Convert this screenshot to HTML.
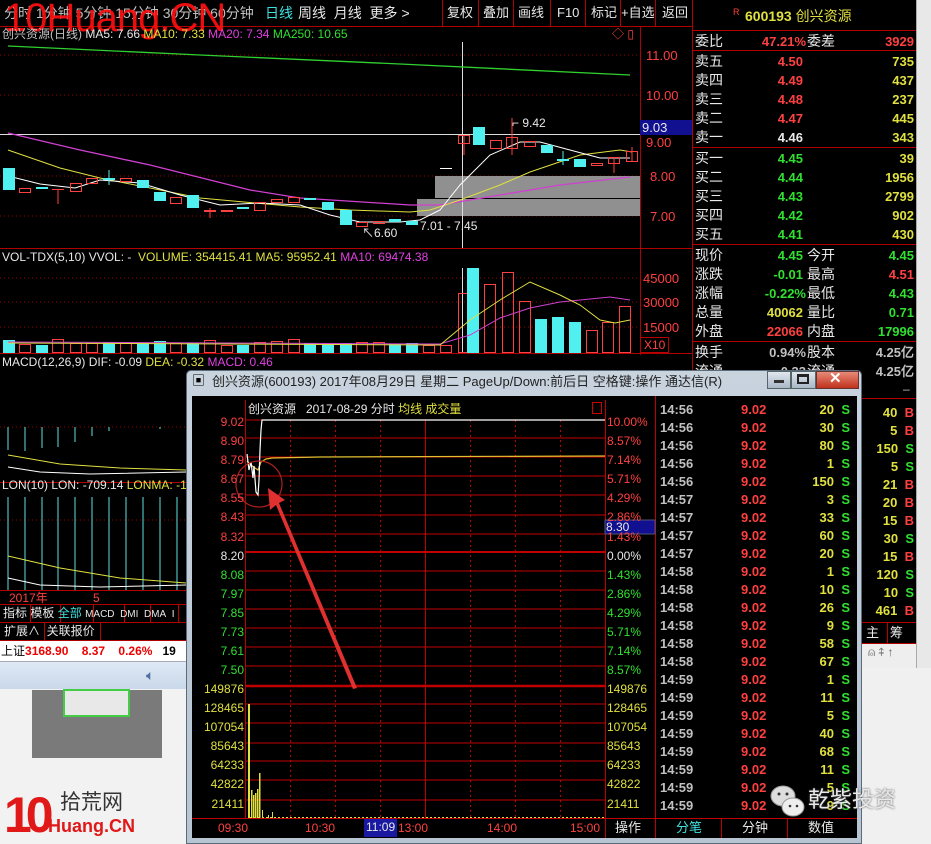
<!DOCTYPE html>
<html><head><meta charset="utf-8">
<style>
*{margin:0;padding:0;box-sizing:border-box}
body{width:931px;height:844px;overflow:hidden;background:#f0f0f0;position:relative;font-family:"Liberation Sans","Noto Sans CJK SC",sans-serif;}
.a{position:absolute;white-space:nowrap;line-height:1}
.w{color:#e8e8e8}.r{color:#ff4040}.g{color:#30e030}.y{color:#e0e040}.c{color:#40e0e0}.m{color:#e040e0}.gr{color:#c0c0c0}
.n{font-family:"Liberation Sans",sans-serif;font-weight:bold}
.tb{position:absolute;top:6px;font-size:13px;color:#e8e8e8;line-height:1;white-space:nowrap}
</style></head><body>
<div class="a" style="left:0;top:0;width:916px;height:668px;background:#000"></div>
<div class="a" style="left:916px;top:0;width:15px;height:668px;background:#e8e8e8;border-left:1px solid #aaa"></div>
<svg class="a" style="left:0;top:0" width="916" height="668">
<g stroke="#b00000" stroke-width="1" fill="none">
<line x1="0" y1="26.5" x2="692" y2="26.5"/>
<line x1="442.5" y1="0" x2="442.5" y2="26"/><line x1="478.5" y1="0" x2="478.5" y2="26"/><line x1="513.5" y1="0" x2="513.5" y2="26"/><line x1="550.5" y1="0" x2="550.5" y2="26"/><line x1="585.5" y1="0" x2="585.5" y2="26"/><line x1="620.5" y1="0" x2="620.5" y2="26"/><line x1="655.5" y1="0" x2="655.5" y2="26"/>
<line x1="640.5" y1="26" x2="640.5" y2="355"/>
<line x1="692.5" y1="0" x2="692.5" y2="668"/>
<line x1="0" y1="248.5" x2="692" y2="248.5"/>
<line x1="0" y1="353.5" x2="692" y2="353.5"/>
<line x1="0" y1="482.5" x2="186" y2="482.5"/>
<line x1="0" y1="590.5" x2="186" y2="590.5"/>
<line x1="0" y1="604.5" x2="186" y2="604.5"/>
<line x1="0" y1="622.5" x2="186" y2="622.5"/>
<line x1="0" y1="640.5" x2="186" y2="640.5"/>
<line x1="692" y1="30.5" x2="916" y2="30.5"/><line x1="692" y1="50.5" x2="916" y2="50.5"/><line x1="692" y1="147.5" x2="916" y2="147.5"/><line x1="692" y1="244.5" x2="916" y2="244.5"/><line x1="692" y1="341.5" x2="916" y2="341.5"/>
<line x1="862" y1="398.5" x2="916" y2="398.5"/><line x1="862" y1="622.5" x2="916" y2="622.5"/><line x1="862" y1="643.5" x2="916" y2="643.5"/>
</g>
<g stroke="#900" stroke-dasharray="1,3">
<line x1="0" y1="55" x2="640" y2="55"/><line x1="0" y1="95" x2="640" y2="95"/><line x1="0" y1="176" x2="640" y2="176"/><line x1="0" y1="216" x2="640" y2="216"/>
<line x1="0" y1="278" x2="640" y2="278"/><line x1="0" y1="302" x2="640" y2="302"/><line x1="0" y1="327" x2="640" y2="327"/>
<line x1="0" y1="427" x2="186" y2="427"/><line x1="0" y1="520" x2="186" y2="520"/>
</g>
<rect x="435" y="176" width="205" height="40" fill="#909090"/>
<rect x="417" y="198" width="18" height="18" fill="#909090"/>
<line x1="417" y1="198.5" x2="640" y2="198.5" stroke="#000"/>
<line x1="0" y1="134.5" x2="640" y2="134.5" stroke="#ddd"/>
<line x1="462.5" y1="42" x2="462.5" y2="248" stroke="#ddd"/>
<line x1="462.5" y1="268" x2="462.5" y2="353" stroke="#ddd"/>
<polyline fill="none" stroke="#30d030" stroke-width="1.3" points="8,46 200,55 400,64 630,75"/>
<polyline fill="none" stroke="#d040d0" stroke-width="1.3" points="8,133 80,150 150,165 250,190 300,198 410,205 440,205 500,195 560,185 630,177"/>
<polyline fill="none" stroke="#e0e040" stroke-width="1" points="8,150 60,168 100,178 200,198 300,207 350,210 410,212 430,210 460,200 500,185 530,172 580,155 620,150 632,152"/>
<polyline fill="none" stroke="#fff" stroke-width="1" points="8,176 40,184 75,188 100,180 140,183 180,195 220,205 260,203 300,205 330,215 360,222 400,222 420,220 440,210 460,185 490,155 520,142 540,142 570,150 600,158 630,158"/>
<g stroke-width="1">
<rect x="3" y="168" width="12" height="22" fill="#50f0f0"/>
<rect x="19.5" y="188.5" width="11" height="4" fill="none" stroke="#ff4040"/>
<rect x="36" y="187" width="12" height="2" fill="#50f0f0"/>
<line x1="58" y1="189" x2="58" y2="204" stroke="#ff4040"/><line x1="52" y1="189.5" x2="64" y2="189.5" stroke="#ff4040"/>
<rect x="70.5" y="183.5" width="11" height="8" fill="none" stroke="#ff4040"/>
<rect x="86.5" y="178.5" width="11" height="5" fill="none" stroke="#ff4040"/>
<line x1="109" y1="170" x2="109" y2="185" stroke="#50f0f0"/><rect x="103" y="178" width="12" height="2" fill="#50f0f0"/>
<rect x="120.5" y="178.5" width="11" height="3" fill="none" stroke="#ff4040"/>
<rect x="137" y="180" width="12" height="8" fill="#50f0f0"/>
<rect x="154" y="192" width="12" height="9" fill="#50f0f0"/>
<rect x="170.5" y="197.5" width="11" height="6" fill="none" stroke="#ff4040"/>
<rect x="187" y="195" width="12" height="13" fill="#50f0f0"/>
<line x1="210" y1="208" x2="210" y2="218" stroke="#ff4040"/><rect x="204" y="210" width="12" height="2" fill="#ff4040"/>
<rect x="221" y="210" width="12" height="2" fill="#ff4040"/>
<rect x="237" y="207" width="12" height="2" fill="#50f0f0"/>
<rect x="254.5" y="202.5" width="11" height="8" fill="none" stroke="#ff4040"/>
<rect x="271.5" y="199.5" width="11" height="3" fill="none" stroke="#ff4040"/>
<rect x="288.5" y="197.5" width="11" height="5" fill="none" stroke="#ff4040"/>
<rect x="304" y="198" width="12" height="2" fill="#50f0f0"/>
<rect x="322" y="202" width="12" height="8" fill="#50f0f0"/>
<rect x="340" y="210" width="12" height="15" fill="#50f0f0"/>
<rect x="356.5" y="222.5" width="11" height="4" fill="none" stroke="#ff4040"/>
<rect x="373.5" y="221.5" width="11" height="2" fill="none" stroke="#ff4040"/>
<rect x="389" y="219" width="12" height="3" fill="#50f0f0"/>
<rect x="406" y="221" width="12" height="4" fill="#50f0f0"/>
<line x1="440" y1="168.5" x2="452" y2="168.5" stroke="#fff"/>
<line x1="464" y1="135" x2="464" y2="155" stroke="#ff4040"/><rect x="458.5" y="135.5" width="11" height="8" fill="none" stroke="#ff4040"/>
<rect x="473" y="127" width="12" height="18" fill="#50f0f0"/>
<rect x="490.5" y="140.5" width="11" height="8" fill="none" stroke="#ff4040"/>
<line x1="512" y1="118" x2="512" y2="155" stroke="#ff4040"/><rect x="506.5" y="137.5" width="11" height="11" fill="none" stroke="#ff4040"/>
<rect x="524.5" y="141.5" width="11" height="5" fill="none" stroke="#ff4040"/>
<rect x="541" y="145" width="12" height="8" fill="#50f0f0"/>
<line x1="563" y1="151" x2="563" y2="165" stroke="#50f0f0"/><rect x="557" y="159" width="12" height="2" fill="#50f0f0"/>
<rect x="574" y="159" width="12" height="8" fill="#50f0f0"/>
<rect x="591.5" y="163.5" width="11" height="2" fill="none" stroke="#ff4040"/>
<line x1="614" y1="157" x2="614" y2="173" stroke="#ff4040"/><rect x="608.5" y="157.5" width="11" height="6" fill="none" stroke="#ff4040"/>
<line x1="632" y1="147" x2="632" y2="162" stroke="#ff4040"/><rect x="626.5" y="151.5" width="11" height="10" fill="none" stroke="#ff4040"/>
</g>
<rect x="640" y="120" width="52" height="15" fill="#101090"/>
<g fill="none" stroke="#ff4040">
<rect x="458.5" y="293.5" width="11" height="59"/><rect x="484.5" y="284.5" width="11" height="68"/><rect x="502.5" y="272.5" width="11" height="80"/><rect x="519.5" y="301.5" width="11" height="51"/><rect x="586.5" y="330.5" width="11" height="22"/><rect x="602.5" y="322.5" width="11" height="30"/><rect x="619.5" y="306.5" width="11" height="46"/>
<rect x="19.5" y="344.5" width="11" height="8"/><rect x="52.5" y="339.5" width="11" height="13"/><rect x="70.5" y="343.5" width="11" height="9"/><rect x="86.5" y="343.5" width="11" height="9"/><rect x="120.5" y="342.5" width="11" height="10"/><rect x="170.5" y="343.5" width="11" height="9"/><rect x="204.5" y="340.5" width="11" height="12"/><rect x="221.5" y="345.5" width="11" height="7"/><rect x="254.5" y="342.5" width="11" height="10"/><rect x="271.5" y="341.5" width="11" height="11"/><rect x="288.5" y="339.5" width="11" height="13"/><rect x="356.5" y="342.5" width="11" height="10"/><rect x="373.5" y="342.5" width="11" height="10"/><rect x="423.5" y="345.5" width="11" height="7"/><rect x="440.5" y="345.5" width="11" height="7"/>
</g>
<g fill="#50f0f0">
<rect x="467" y="268" width="12" height="85"/><rect x="535" y="319" width="12" height="34"/><rect x="552" y="317" width="12" height="36"/><rect x="569" y="322" width="12" height="31"/>
<rect x="3" y="340" width="12" height="13"/><rect x="36" y="345" width="12" height="8"/><rect x="103" y="342" width="12" height="11"/><rect x="137" y="343" width="12" height="10"/><rect x="154" y="341" width="12" height="12"/><rect x="187" y="343" width="12" height="10"/><rect x="237" y="345" width="12" height="8"/><rect x="304" y="343" width="12" height="10"/><rect x="322" y="343" width="12" height="10"/><rect x="340" y="343" width="12" height="10"/><rect x="389" y="344" width="12" height="9"/><rect x="406" y="343" width="12" height="10"/>
</g>
<polyline fill="none" stroke="#d040d0" points="8,342 440,344 470,335 500,318 530,308 560,302 610,297 630,300"/>
<polyline fill="none" stroke="#e0e040" points="8,343 440,345 470,320 500,300 530,282 560,295 580,305 600,320 615,323 630,320"/>
<rect x="640.5" y="337.5" width="28" height="15" fill="none" stroke="#b00"/>
<g stroke="#60e0e0">
<line x1="8" y1="427" x2="8" y2="450"/><line x1="25" y1="427" x2="25" y2="451"/><line x1="42" y1="427" x2="42" y2="448"/><line x1="58" y1="427" x2="58" y2="447"/><line x1="75" y1="427" x2="75" y2="442"/><line x1="92" y1="427" x2="92" y2="436"/><line x1="109" y1="427" x2="109" y2="431"/><line x1="160" y1="427" x2="160" y2="429"/>
<line x1="8" y1="497" x2="8" y2="590"/><line x1="25" y1="497" x2="25" y2="590"/><line x1="42" y1="497" x2="42" y2="590"/><line x1="58" y1="497" x2="58" y2="590"/><line x1="75" y1="497" x2="75" y2="590"/><line x1="92" y1="497" x2="92" y2="590"/><line x1="109" y1="497" x2="109" y2="590"/><line x1="126" y1="497" x2="126" y2="590"/><line x1="143" y1="497" x2="143" y2="590"/><line x1="160" y1="497" x2="160" y2="590"/><line x1="177" y1="497" x2="177" y2="590"/>
</g>
<polyline fill="none" stroke="#e0e040" points="8,455 60,464 120,468 186,470"/>
<polyline fill="none" stroke="#fff" points="8,467 40,472 90,474 186,472"/>
<polyline fill="none" stroke="#e0e040" points="8,556 60,568 120,578 186,583"/>
<polyline fill="none" stroke="#fff" points="8,578 40,585 100,587 186,585"/>
<g stroke="#b00"><line x1="30.5" y1="604" x2="30.5" y2="622"/><line x1="60.5" y1="604" x2="60.5" y2="622"/><line x1="93.5" y1="604" x2="93.5" y2="622"/><line x1="124.5" y1="604" x2="124.5" y2="622"/><line x1="150.5" y1="604" x2="150.5" y2="622"/><line x1="178.5" y1="604" x2="178.5" y2="622"/><line x1="44.5" y1="622" x2="44.5" y2="640"/><line x1="100.5" y1="622" x2="100.5" y2="640"/><line x1="887.5" y1="622" x2="887.5" y2="643"/></g>
</svg>
<div class="a gr" style="left:4px;top:6px;font-size:14px">分时 1分钟 5分钟 15分钟 30分钟 60分钟</div>
<div class="a c" style="left:265px;top:6px;font-size:14px">日线</div>
<div class="a w" style="left:298px;top:6px;font-size:14px">周线&nbsp; 月线&nbsp; 更多 &gt;</div>
<div class="tb" style="left:447px">复权</div>
<div class="tb" style="left:483px">叠加</div>
<div class="tb" style="left:518px">画线</div>
<div class="tb" style="left:557px">F10</div>
<div class="tb" style="left:591px">标记</div>
<div class="tb" style="left:621px">+自选</div>
<div class="tb" style="left:662px">返回</div>
<div class="a" style="left:4px;top:-2px;font-size:40px;color:#ff1010;font-family:'Liberation Sans',sans-serif;letter-spacing:-1px;opacity:.92">10Huang.CN</div>
<div class="a" style="left:2px;top:28px;font-size:12px"><span class="gr">创兴资源(日线)</span> <span class="w">MA5: 7.66</span> <span class="y">MA10: 7.33</span> <span class="m">MA20: 7.34</span> <span class="g">MA250: 10.65</span></div>
<div class="a r" style="left:612px;top:28px;font-size:12px">◇ ▯</div>
<div class="a r" style="left:646px;top:49px;font-size:13px">11.00</div>
<div class="a r" style="left:646px;top:89px;font-size:13px">10.00</div>
<div class="a w" style="left:642px;top:121px;font-size:13px">9.03</div>
<div class="a r" style="left:646px;top:136px;font-size:13px">9.00</div>
<div class="a r" style="left:650px;top:170px;font-size:13px">8.00</div>
<div class="a r" style="left:650px;top:210px;font-size:13px">7.00</div>
<div class="a w" style="left:512px;top:117px;font-size:12px">⌐ 9.42</div>
<div class="a w" style="left:362px;top:227px;font-size:12px">↖6.60</div>
<div class="a w" style="left:420px;top:220px;font-size:12px">7.01 - 7.45</div>
<div class="a" style="left:2px;top:251px;font-size:12px"><span class="w">VOL-TDX(5,10) VVOL: -</span>&nbsp; <span class="y">VOLUME: 354415.41 MA5: 95952.41</span> <span class="m">MA10: 69474.38</span></div>
<div class="a r" style="left:643px;top:272px;font-size:13px">45000</div>
<div class="a r" style="left:643px;top:296px;font-size:13px">30000</div>
<div class="a r" style="left:643px;top:321px;font-size:13px">15000</div>
<div class="a r" style="left:644px;top:339px;font-size:12px">X10</div>
<div class="a" style="left:2px;top:356px;font-size:12px"><span class="w">MACD(12,26,9) DIF: -0.09</span> <span class="y">DEA: -0.32</span> <span class="m">MACD: 0.46</span></div>
<div class="a" style="left:2px;top:479px;font-size:12px"><span class="w">LON(10) LON: -709.14</span> <span class="y">LONMA: -1</span></div>
<div class="a r" style="left:9px;top:592px;font-size:12px">2017年</div>
<div class="a r" style="left:93px;top:592px;font-size:12px">5</div>
<div class="a" style="left:3px;top:607px;font-size:12px"><span class="w">指标</span> <span class="w">模板</span> <span class="c">全部</span> <span class="w" style="font-size:10px">MACD&nbsp; DMI&nbsp; DMA&nbsp; I</span></div>
<div class="a w" style="left:4px;top:625px;font-size:12px">扩展∧&nbsp; 关联报价</div>
<div class="a" style="left:0;top:641px;width:186px;height:20px;background:#fff"></div>
<div class="a n" style="left:1px;top:645px;font-size:12px;color:#000"><span style="font-weight:normal">上证</span><span style="color:#e00">3168.90&nbsp;&nbsp;&nbsp; 8.37&nbsp;&nbsp;&nbsp; 0.26%</span>&nbsp;&nbsp; 19</div>
<div class="a" style="left:0;top:661px;width:186px;height:28px;background:linear-gradient(#dfe9f5,#c9d8ea);border-top:1px solid #aab"></div>
<div class="a" style="left:146px;top:668px;font-size:14px;color:#4a6fa0">🔈︎</div>
<div class="a" style="left:0;top:689px;width:186px;height:155px;background:#f2f2f2"></div>
<div class="a" style="left:32px;top:690px;width:130px;height:68px;background:#7a7a7a"></div>
<div class="a" style="left:63px;top:689px;width:67px;height:28px;background:#e8e8e8;border:2px solid #4c4"></div>
<div class="a" style="left:4px;top:790px;font-size:50px;color:#e01818;font-weight:bold;font-family:'Liberation Sans',sans-serif;letter-spacing:-6px">10</div>
<div class="a" style="left:60px;top:792px;font-size:21px;color:#333">拾荒网</div>
<div class="a" style="left:48px;top:817px;font-size:18px;color:#e01818;font-weight:bold">Huang.CN</div>
<div class="a r" style="left:733px;top:8px;font-size:9px">R</div>
<div class="a y" style="left:745px;top:9px;font-size:14px"><b>600193</b> 创兴资源</div>
<div class="a" style="left:695px;top:32px;width:220px;font-size:14px;line-height:19px">
<div style="position:relative;height:19px"><span class="w">委比</span><span class="r n" style="position:absolute;right:109px;font-size:13px">47.21%</span><span class="w" style="position:absolute;left:112px">委差</span><span class="r n" style="position:absolute;right:1px;font-size:13px">3929</span></div>
</div>
<div class="a" style="left:695px;top:52px;width:220px;font-size:14px;line-height:19px">
<div style="position:relative;height:19px"><span class="w">卖五</span><span class="r n" style="position:absolute;right:112px;font-size:13px">4.50</span><span class="y n" style="position:absolute;right:1px;font-size:13px">735</span></div>
<div style="position:relative;height:19px"><span class="w">卖四</span><span class="r n" style="position:absolute;right:112px;font-size:13px">4.49</span><span class="y n" style="position:absolute;right:1px;font-size:13px">437</span></div>
<div style="position:relative;height:19px"><span class="w">卖三</span><span class="r n" style="position:absolute;right:112px;font-size:13px">4.48</span><span class="y n" style="position:absolute;right:1px;font-size:13px">237</span></div>
<div style="position:relative;height:19px"><span class="w">卖二</span><span class="r n" style="position:absolute;right:112px;font-size:13px">4.47</span><span class="y n" style="position:absolute;right:1px;font-size:13px">445</span></div>
<div style="position:relative;height:19px"><span class="w">卖一</span><span class="w n" style="position:absolute;right:112px;font-size:13px">4.46</span><span class="y n" style="position:absolute;right:1px;font-size:13px">343</span></div>
</div>
<div class="a" style="left:695px;top:149px;width:220px;font-size:14px;line-height:19px">
<div style="position:relative;height:19px"><span class="w">买一</span><span class="g n" style="position:absolute;right:112px;font-size:13px">4.45</span><span class="y n" style="position:absolute;right:1px;font-size:13px">39</span></div>
<div style="position:relative;height:19px"><span class="w">买二</span><span class="g n" style="position:absolute;right:112px;font-size:13px">4.44</span><span class="y n" style="position:absolute;right:1px;font-size:13px">1956</span></div>
<div style="position:relative;height:19px"><span class="w">买三</span><span class="g n" style="position:absolute;right:112px;font-size:13px">4.43</span><span class="y n" style="position:absolute;right:1px;font-size:13px">2799</span></div>
<div style="position:relative;height:19px"><span class="w">买四</span><span class="g n" style="position:absolute;right:112px;font-size:13px">4.42</span><span class="y n" style="position:absolute;right:1px;font-size:13px">902</span></div>
<div style="position:relative;height:19px"><span class="w">买五</span><span class="g n" style="position:absolute;right:112px;font-size:13px">4.41</span><span class="y n" style="position:absolute;right:1px;font-size:13px">430</span></div>
</div>
<div class="a" style="left:695px;top:246px;width:220px;font-size:14px;line-height:19px">
<div style="position:relative;height:19px"><span class="w">现价</span><span class="g n" style="position:absolute;right:112px;font-size:13px">4.45</span><span class="w" style="position:absolute;left:112px">今开</span><span class="g n" style="position:absolute;right:1px;font-size:13px">4.45</span></div>
<div style="position:relative;height:19px"><span class="w">涨跌</span><span class="g n" style="position:absolute;right:112px;font-size:13px">-0.01</span><span class="w" style="position:absolute;left:112px">最高</span><span class="r n" style="position:absolute;right:1px;font-size:13px">4.51</span></div>
<div style="position:relative;height:19px"><span class="w">涨幅</span><span class="g n" style="position:absolute;right:109px;font-size:13px">-0.22%</span><span class="w" style="position:absolute;left:112px">最低</span><span class="g n" style="position:absolute;right:1px;font-size:13px">4.43</span></div>
<div style="position:relative;height:19px"><span class="w">总量</span><span class="y n" style="position:absolute;right:112px;font-size:13px">40062</span><span class="w" style="position:absolute;left:112px">量比</span><span class="g n" style="position:absolute;right:1px;font-size:13px">0.71</span></div>
<div style="position:relative;height:19px"><span class="w">外盘</span><span class="r n" style="position:absolute;right:112px;font-size:13px">22066</span><span class="w" style="position:absolute;left:112px">内盘</span><span class="g n" style="position:absolute;right:1px;font-size:13px">17996</span></div>
</div>
<div class="a" style="left:695px;top:343px;width:220px;font-size:14px;line-height:19px">
<div style="position:relative;height:19px"><span class="w">换手</span><span class="gr n" style="position:absolute;right:109px;font-size:13px">0.94%</span><span class="w" style="position:absolute;left:112px">股本</span><span class="gr n" style="position:absolute;right:1px;font-size:13px">4.25亿</span></div>
<div style="position:relative;height:19px"><span class="w">流通</span><span class="gr n" style="position:absolute;right:109px;font-size:13px">0.33</span><span class="w" style="position:absolute;left:112px">流通</span><span class="gr n" style="position:absolute;right:1px;font-size:13px">4.25亿</span></div>
</div>
<div class="a gr" style="left:903px;top:383px;font-size:12px">–</div>
<div class="a n" style="left:862px;top:404px;width:52px;font-size:13px;line-height:18px;text-align:right">
<div><span class="y">40</span>&nbsp; <span class="r">B</span></div><div><span class="y">5</span>&nbsp; <span class="r">B</span></div><div><span class="y">150</span>&nbsp; <span class="g">S</span></div><div><span class="y">5</span>&nbsp; <span class="g">S</span></div><div><span class="y">21</span>&nbsp; <span class="r">B</span></div><div><span class="y">20</span>&nbsp; <span class="r">B</span></div><div><span class="y">15</span>&nbsp; <span class="r">B</span></div><div><span class="y">30</span>&nbsp; <span class="g">S</span></div><div><span class="y">15</span>&nbsp; <span class="r">B</span></div><div><span class="y">120</span>&nbsp; <span class="g">S</span></div><div><span class="y">10</span>&nbsp; <span class="g">S</span></div><div><span class="y">461</span>&nbsp; <span class="r">B</span></div>
</div>
<div class="a w" style="left:866px;top:626px;font-size:13px">主&nbsp;&nbsp; 筹</div>
<div class="a" style="left:862px;top:644px;width:54px;height:24px;background:#eee"></div>
<div class="a" style="left:868px;top:646px;font-size:12px;color:#666">⍝ ⇞ ↑</div>
<div class="a" style="left:862px;top:668px;width:69px;height:176px;background:#f0f0f0"></div>
<div class="a" style="left:186px;top:370px;width:676px;height:474px;background:linear-gradient(#c8d3de,#b7c4d2);border:1px solid #5a6b7c;border-radius:5px 5px 0 0"></div>
<div class="a" style="left:192px;top:374px;font-size:13px;color:#000">▣</div>
<div class="a" style="left:212px;top:375px;font-size:13px;color:#222">创兴资源(600193) 2017年08月29日 星期二 PageUp/Down:前后日 空格键:操作 通达信(R)</div>
<div class="a" style="left:767px;top:371px;width:24px;height:18px;background:linear-gradient(#e0e6ee,#a9b6c6);border:1px solid #566"></div>
<div class="a" style="left:791px;top:371px;width:25px;height:18px;background:linear-gradient(#e0e6ee,#a9b6c6);border:1px solid #566"></div>
<div class="a" style="left:816px;top:371px;width:43px;height:18px;background:linear-gradient(#e88a78,#c0321c);border:1px solid #633"></div>
<div class="a" style="left:774px;top:380px;width:10px;height:3px;background:#333"></div>
<div class="a" style="left:797px;top:374px;width:12px;height:10px;border:2px solid #222;border-top-width:3px"></div>
<div class="a" style="left:829px;top:371px;font-size:15px;color:#fff;font-weight:bold">✕</div>
<div class="a" style="left:192px;top:396px;width:665px;height:442px;background:#000"></div>
<svg class="a" style="left:0;top:0" width="931" height="844">
<g stroke="#c00000">
<line x1="245" y1="420" x2="605" y2="420"/><line x1="245" y1="438" x2="605" y2="438"/><line x1="245" y1="457" x2="605" y2="457"/><line x1="245" y1="476" x2="605" y2="476"/><line x1="245" y1="495" x2="605" y2="495"/><line x1="245" y1="515" x2="605" y2="515"/><line x1="245" y1="534" x2="605" y2="534"/><line x1="245" y1="552" x2="605" y2="552" stroke-width="2"/><line x1="245" y1="571" x2="605" y2="571"/><line x1="245" y1="590" x2="605" y2="590"/><line x1="245" y1="609" x2="605" y2="609"/><line x1="245" y1="628" x2="605" y2="628"/><line x1="245" y1="647" x2="605" y2="647"/><line x1="245" y1="666" x2="605" y2="666"/>
<line x1="245" y1="686" x2="605" y2="686" stroke-width="2.5"/><line x1="245" y1="704" x2="605" y2="704"/><line x1="245" y1="723" x2="605" y2="723"/><line x1="245" y1="743" x2="605" y2="743"/><line x1="245" y1="761" x2="605" y2="761"/><line x1="245" y1="780" x2="605" y2="780"/><line x1="245" y1="800" x2="605" y2="800"/>
<line x1="192" y1="818.5" x2="857" y2="818.5"/>
<line x1="245.5" y1="400" x2="245.5" y2="818"/><line x1="605.5" y1="400" x2="605.5" y2="838"/><line x1="655.5" y1="396" x2="655.5" y2="838"/><line x1="425.5" y1="420" x2="425.5" y2="818"/>
<line x1="721.5" y1="818" x2="721.5" y2="838"/><line x1="787.5" y1="818" x2="787.5" y2="838"/>
</g>
<g stroke="#c00000" stroke-dasharray="2,3">
<line x1="290.5" y1="420" x2="290.5" y2="818"/><line x1="335.5" y1="420" x2="335.5" y2="818"/><line x1="380.5" y1="420" x2="380.5" y2="818"/><line x1="470.5" y1="420" x2="470.5" y2="818"/><line x1="515.5" y1="420" x2="515.5" y2="818"/><line x1="560.5" y1="420" x2="560.5" y2="818"/>
</g>
<rect x="592.5" y="402.5" width="9" height="11" fill="none" stroke="#c00"/>
<polyline fill="none" stroke="#e0c030" stroke-width="1.2" points="247,461 251,465 255,468 258,470 261,462 266,459 272,458 320,457 605,456"/>
<polyline fill="none" stroke="#fff" stroke-width="1.2" points="247,454 249,470 251,462 253,478 254,466 256,492 258,495 259,480 260,450 261,430 262,420 605,420"/>
<circle cx="259" cy="484" r="23" fill="none" stroke="#b02020" stroke-width="1.2"/>
<polygon points="357,688 353,689 276,505 270,510 268,488 285,500 279,503" fill="#e03030"/>
<g fill="#e0e040">
<rect x="248" y="704" width="2" height="114"/><rect x="251" y="790" width="1.5" height="28"/><rect x="253" y="795" width="1.5" height="23"/><rect x="255" y="793" width="1.5" height="25"/><rect x="257" y="789" width="1.5" height="29"/><rect x="259" y="773" width="1.5" height="45"/><rect x="262" y="810" width="1" height="8"/><rect x="268" y="815" width="1" height="3"/><rect x="272" y="812" width="1" height="6"/>
</g>
<line x1="250" y1="817.5" x2="605" y2="817.5" stroke="#e0e040" stroke-dasharray="2,2"/>
<rect x="605" y="520" width="50" height="14" fill="#101090" stroke="#557"/>
<rect x="364" y="819" width="33" height="18" fill="#1818a0"/>
</svg>
<div class="a" style="left:248px;top:403px;font-size:12px"><span class="w">创兴资源&nbsp;&nbsp; 2017-08-29 分时</span> <span class="y">均线 成交量</span></div>
<div class="a" style="left:192px;top:413px;width:52px;font-size:12px;line-height:19.1px;text-align:right">
<div class="r">9.02</div><div class="r">8.90</div><div class="r">8.79</div><div class="r">8.67</div><div class="r">8.55</div><div class="r">8.43</div><div class="r">8.32</div><div class="w">8.20</div><div class="g">8.08</div><div class="g">7.97</div><div class="g">7.85</div><div class="g">7.73</div><div class="g">7.61</div><div class="g">7.50</div>
</div>
<div class="a y" style="left:192px;top:680px;width:52px;font-size:12px;line-height:19.1px;text-align:right">
<div>149876</div><div>128465</div><div>107054</div><div>85643</div><div>64233</div><div>42822</div><div>21411</div>
</div>
<div class="a" style="left:607px;top:413px;font-size:12px;line-height:19.1px">
<div class="r">10.00%</div><div class="r">8.57%</div><div class="r">7.14%</div><div class="r">5.71%</div><div class="r">4.29%</div><div class="r">2.86%</div><div class="r">1.43%</div><div class="w">0.00%</div><div class="g">1.43%</div><div class="g">2.86%</div><div class="g">4.29%</div><div class="g">5.71%</div><div class="g">7.14%</div><div class="g">8.57%</div>
</div>
<div class="a w" style="left:606px;top:521px;font-size:12px">8.30</div>
<div class="a y" style="left:607px;top:680px;font-size:12px;line-height:19.1px">
<div>149876</div><div>128465</div><div>107054</div><div>85643</div><div>64233</div><div>42822</div><div>21411</div>
</div>
<div class="a r" style="left:218px;top:822px;font-size:12px">09:30</div>
<div class="a r" style="left:305px;top:822px;font-size:12px">10:30</div>
<div class="a w" style="left:366px;top:821px;font-size:12px">11:09</div>
<div class="a r" style="left:398px;top:822px;font-size:12px">13:00</div>
<div class="a r" style="left:487px;top:822px;font-size:12px">14:00</div>
<div class="a r" style="left:570px;top:822px;font-size:12px">15:00</div>
<div class="a w" style="left:615px;top:821px;font-size:13px">操作</div>
<div class="a c" style="left:676px;top:821px;font-size:13px">分笔</div>
<div class="a w" style="left:742px;top:821px;font-size:13px">分钟</div>
<div class="a w" style="left:808px;top:821px;font-size:13px">数值</div>
<div class="a n" style="left:660px;top:401px;width:192px;font-size:13px;line-height:18px">
<div style="position:relative;height:18px"><span class="gr">14:56</span><span class="r" style="position:absolute;left:81px">9.02</span><span class="y" style="position:absolute;right:18px">20</span><span class="g" style="position:absolute;right:2px">S</span></div>
<div style="position:relative;height:18px"><span class="gr">14:56</span><span class="r" style="position:absolute;left:81px">9.02</span><span class="y" style="position:absolute;right:18px">30</span><span class="g" style="position:absolute;right:2px">S</span></div>
<div style="position:relative;height:18px"><span class="gr">14:56</span><span class="r" style="position:absolute;left:81px">9.02</span><span class="y" style="position:absolute;right:18px">80</span><span class="g" style="position:absolute;right:2px">S</span></div>
<div style="position:relative;height:18px"><span class="gr">14:56</span><span class="r" style="position:absolute;left:81px">9.02</span><span class="y" style="position:absolute;right:18px">1</span><span class="g" style="position:absolute;right:2px">S</span></div>
<div style="position:relative;height:18px"><span class="gr">14:56</span><span class="r" style="position:absolute;left:81px">9.02</span><span class="y" style="position:absolute;right:18px">150</span><span class="g" style="position:absolute;right:2px">S</span></div>
<div style="position:relative;height:18px"><span class="gr">14:57</span><span class="r" style="position:absolute;left:81px">9.02</span><span class="y" style="position:absolute;right:18px">3</span><span class="g" style="position:absolute;right:2px">S</span></div>
<div style="position:relative;height:18px"><span class="gr">14:57</span><span class="r" style="position:absolute;left:81px">9.02</span><span class="y" style="position:absolute;right:18px">33</span><span class="g" style="position:absolute;right:2px">S</span></div>
<div style="position:relative;height:18px"><span class="gr">14:57</span><span class="r" style="position:absolute;left:81px">9.02</span><span class="y" style="position:absolute;right:18px">60</span><span class="g" style="position:absolute;right:2px">S</span></div>
<div style="position:relative;height:18px"><span class="gr">14:57</span><span class="r" style="position:absolute;left:81px">9.02</span><span class="y" style="position:absolute;right:18px">20</span><span class="g" style="position:absolute;right:2px">S</span></div>
<div style="position:relative;height:18px"><span class="gr">14:58</span><span class="r" style="position:absolute;left:81px">9.02</span><span class="y" style="position:absolute;right:18px">1</span><span class="g" style="position:absolute;right:2px">S</span></div>
<div style="position:relative;height:18px"><span class="gr">14:58</span><span class="r" style="position:absolute;left:81px">9.02</span><span class="y" style="position:absolute;right:18px">10</span><span class="g" style="position:absolute;right:2px">S</span></div>
<div style="position:relative;height:18px"><span class="gr">14:58</span><span class="r" style="position:absolute;left:81px">9.02</span><span class="y" style="position:absolute;right:18px">26</span><span class="g" style="position:absolute;right:2px">S</span></div>
<div style="position:relative;height:18px"><span class="gr">14:58</span><span class="r" style="position:absolute;left:81px">9.02</span><span class="y" style="position:absolute;right:18px">9</span><span class="g" style="position:absolute;right:2px">S</span></div>
<div style="position:relative;height:18px"><span class="gr">14:58</span><span class="r" style="position:absolute;left:81px">9.02</span><span class="y" style="position:absolute;right:18px">58</span><span class="g" style="position:absolute;right:2px">S</span></div>
<div style="position:relative;height:18px"><span class="gr">14:58</span><span class="r" style="position:absolute;left:81px">9.02</span><span class="y" style="position:absolute;right:18px">67</span><span class="g" style="position:absolute;right:2px">S</span></div>
<div style="position:relative;height:18px"><span class="gr">14:59</span><span class="r" style="position:absolute;left:81px">9.02</span><span class="y" style="position:absolute;right:18px">1</span><span class="g" style="position:absolute;right:2px">S</span></div>
<div style="position:relative;height:18px"><span class="gr">14:59</span><span class="r" style="position:absolute;left:81px">9.02</span><span class="y" style="position:absolute;right:18px">11</span><span class="g" style="position:absolute;right:2px">S</span></div>
<div style="position:relative;height:18px"><span class="gr">14:59</span><span class="r" style="position:absolute;left:81px">9.02</span><span class="y" style="position:absolute;right:18px">5</span><span class="g" style="position:absolute;right:2px">S</span></div>
<div style="position:relative;height:18px"><span class="gr">14:59</span><span class="r" style="position:absolute;left:81px">9.02</span><span class="y" style="position:absolute;right:18px">40</span><span class="g" style="position:absolute;right:2px">S</span></div>
<div style="position:relative;height:18px"><span class="gr">14:59</span><span class="r" style="position:absolute;left:81px">9.02</span><span class="y" style="position:absolute;right:18px">68</span><span class="g" style="position:absolute;right:2px">S</span></div>
<div style="position:relative;height:18px"><span class="gr">14:59</span><span class="r" style="position:absolute;left:81px">9.02</span><span class="y" style="position:absolute;right:18px">11</span><span class="g" style="position:absolute;right:2px">S</span></div>
<div style="position:relative;height:18px"><span class="gr">14:59</span><span class="r" style="position:absolute;left:81px">9.02</span><span class="y" style="position:absolute;right:18px">5</span><span class="g" style="position:absolute;right:2px">S</span></div>
<div style="position:relative;height:18px"><span class="gr">14:59</span><span class="r" style="position:absolute;left:81px">9.02</span><span class="y" style="position:absolute;right:18px">9</span><span class="g" style="position:absolute;right:2px">S</span></div>
</div>
<svg class="a" style="left:768px;top:782px" width="40" height="40"><ellipse cx="15" cy="14" rx="12" ry="10" fill="#ddd" stroke="#999"/><ellipse cx="25" cy="25" rx="11" ry="9" fill="#eee" stroke="#999"/><circle cx="11" cy="12" r="1.5" fill="#333"/><circle cx="19" cy="12" r="1.5" fill="#333"/><circle cx="22" cy="24" r="1.3" fill="#333"/><circle cx="29" cy="24" r="1.3" fill="#333"/></svg>
<div class="a" style="left:808px;top:789px;font-size:22px;color:#e8e8e8;text-shadow:0 0 2px #555">乾紫投资</div>
</body></html>
